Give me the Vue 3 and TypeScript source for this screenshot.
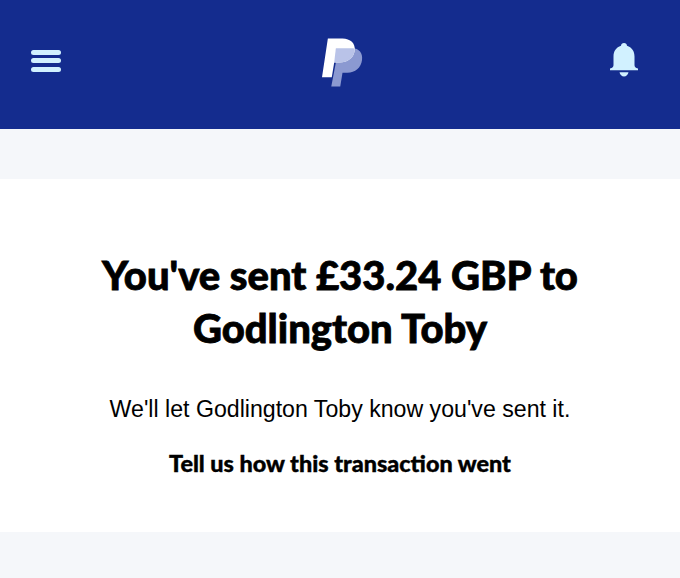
<script setup lang="ts">
const recipient = 'Godlington Toby'
</script>

<template>
  <div class="page">
    <header class="topbar">
      <button class="menu-btn" aria-label="Menu">
        <span></span>
        <span></span>
        <span></span>
      </button>
      <svg class="logo" viewBox="0 0 42 50" aria-label="PayPal">
        <path class="logo-back" d="M17 10H31C38 10 42 15 41 22C40 30 34 35 26 35H21L18.700 49H9.500Z" />
        <path class="logo-front" d="M6 0H21C29 0 34.500 5 33.500 12.500C32.500 20 26 24.500 18 24.500H12.500L10 39.500H0Z" />
        <path class="logo-mid" d="M14.200 10H31C33 10 33.500 10.500 33.500 12.500C32.500 20 26 24.500 18 24.500H12.500Z" />
      </svg>
      <svg class="bell" viewBox="0 0 28 34" aria-label="Notifications">
        <path d="M14 0C15.800 0 16.800 1 17 2.700C21.800 4.200 24.500 8 24.500 13.500V22C24.500 24 25.500 25 28 25.500V27.300H0V25.500C2.500 25 3.500 24 3.500 22V13.500C3.500 8 6.200 4.200 11 2.700C11.200 1 12.200 0 14 0Z" />
        <path d="M9.500 29.200H18.500C18 31.800 16.200 33.500 14 33.500C11.800 33.500 10 31.800 9.500 29.200Z" />
      </svg>
    </header>

    <div class="band"></div>

    <main class="card">
      <h1>You've sent £33.24 GBP to<br />{{ recipient }}</h1>
      <p class="note">We'll let {{ recipient }} know you've sent it.</p>
      <p class="feedback">Tell us how this transaction went</p>
    </main>
  </div>
</template>

<style>
html,
body {
  margin: 0;
  background: #f5f7fa;
}
</style>

<style scoped>
.page {
  min-height: 578px;
  background: #f5f7fa;
  overflow: hidden;
}

.topbar {
  height: 129px;
  background: #142c8e;
  display: flex;
  align-items: center;
  justify-content: space-between;
  padding: 0 42px 10px 31px;
  box-sizing: border-box;
}

.menu-btn {
  display: flex;
  flex-direction: column;
  gap: 3.5px;
  width: 30px;
  padding: 0;
  margin-top: 2px;
  border: none;
  background: none;
}

.menu-btn span {
  display: block;
  height: 5px;
  border-radius: 3px;
  background: #d1f1ff;
}

.logo {
  width: 41px;
  height: 50px;
  margin: 6px 0 0 13px;
}

.logo-front {
  fill: #fff;
}

.logo-back {
  fill: #8b99d1;
}

.logo-mid {
  fill: #b9c3e8;
}

.bell {
  width: 28px;
  height: 34px;
  margin-top: 1px;
  fill: #d1f1ff;
}

.band {
  height: 50px;
}

.card {
  height: 353px;
  background: #fff;
  box-sizing: border-box;
  padding-top: 70px;
  text-align: center;
  color: #000;
}

h1 {
  margin: 0;
  font-family: Lato, "Noto Sans", sans-serif;
  font-size: 40px;
  font-weight: 900;
  line-height: 53px;
  -webkit-text-stroke: 0.8px #000;
}

.note {
  margin: 39px 0 0;
  font-family: "Liberation Sans", Arial, sans-serif;
  font-size: 23.150px;
  line-height: 30px;
}

.feedback {
  margin: 24px 0 0;
  font-family: Lato, "Noto Sans", sans-serif;
  font-size: 23.400px;
  font-weight: 900;
  line-height: 30px;
  -webkit-text-stroke: 0.4px #000;
}
</style>
